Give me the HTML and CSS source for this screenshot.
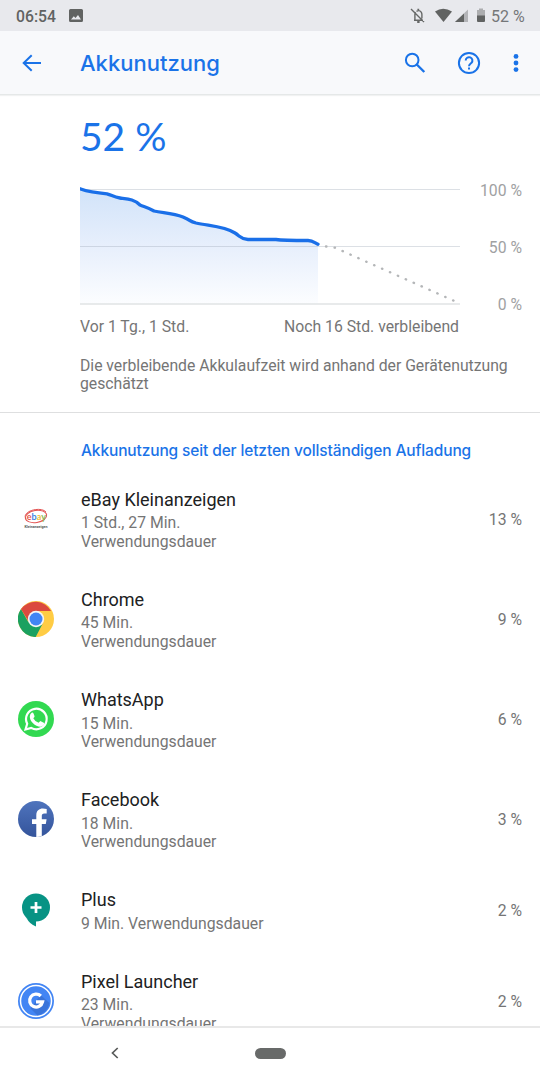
FILE: index.html
```html
<!DOCTYPE html>
<html lang="de">
<head>
<meta charset="utf-8">
<title>Akkunutzung</title>
<link rel="stylesheet" href="styles.css">
</head>
<body>
<div class="screen">
  <header class="status">
    <span class="clock">06:54</span>
    <svg class="status-image" width="14" height="14" viewBox="0 0 14 14"><path fill="#616362" fill-rule="evenodd" d="M1.5 0h11Q14 0 14 1.5v10q0 1.5-1.5 1.5h-11Q0 13 0 11.500v-10Q0 0 1.500 0zM2 10.500h10L9 6 6.500 9 4.800 7.200z"/></svg>
    <svg class="status-icons" width="76" height="18" viewBox="0 0 76 18">
      <g fill="none" stroke="#666867" stroke-width="1.400"><path d="M1 2l13 13M4 13.200h9M4.900 13V7.500q0-1.300.6-2.300M6.500 4.300q3-1.700 4.700.8.700 1 .7 2.400v4"/><path d="M8.300 3V1.800M7.200 15h2.400" stroke-width="1.800"/></g>
      <path fill="#616362" d="M25 4.500Q33 -1 42 4.500L33.500 15z"/>
      <path fill="#b3b4b7" d="M58 2.500V15H45z"/><path fill="#616362" d="M54 6.400V15H45z"/>
      <path fill="#acadaf" d="M67 3h2V1.500h4V3h2v6h-8z"/><path fill="#616362" d="M67 8.500h8V14q0 1-1 1h-6q-1 0-1-1z"/>
    </svg>
    <span class="charge">52 %</span>
  </header>
  <nav class="appbar">
    <svg class="back" width="20" height="18" viewBox="0 0 20 18"><path d="M19 9H1.500M9.700 1.200L1.700 9l8 7.800" fill="none" stroke="#1a73e8" stroke-width="2"/></svg>
    <h1 class="title">Akkunutzung</h1>
    <svg class="search" width="22" height="22" viewBox="0 0 22 22"><circle cx="8.200" cy="8" r="6.300" fill="none" stroke="#1a73e8" stroke-width="2"/><path d="M12.800 12.500l7.500 7.500" stroke="#1a73e8" stroke-width="2.400"/></svg>
    <svg class="help" width="24" height="24" viewBox="0 0 24 24"><g fill="none" stroke="#1a73e8" stroke-width="2"><circle cx="12" cy="12" r="10.100"/><path d="M8.700 9.500a3.350 3.350 0 1 1 5.800 2.300C13 13.100 12 13.500 12 15.200"/></g><path d="M11 16.500h2v2h-2z" fill="#1a73e8"/></svg>
    <svg class="more" width="6" height="20" viewBox="0 0 6 20"><g fill="#1a73e8"><circle cx="3" cy="3.400" r="2.400"/><circle cx="3" cy="10" r="2.400"/><circle cx="3" cy="16.600" r="2.400"/></g></svg>
  </nav>
  <main class="content">
    <section class="summary">
      <div class="level">52 %</div>
      <div class="graph">
        <svg class="chart" width="380" height="124" viewBox="80 184 380 124">
          <defs><linearGradient id="area" x1="0" y1="188" x2="0" y2="304" gradientUnits="userSpaceOnUse"><stop stop-color="#d1e3f9"/><stop offset=".5" stop-color="#e7effc"/><stop offset="1" stop-color="#fcfdff"/></linearGradient></defs>
          <path fill="url(#area)" d="M80 189C89 192 97 193 107 194C112 195 113 197 120 198C128 199 134 200 140 205C145 207 149 208 154 211C163 213 173 213 183 217C192 221 189 221 196 223C209 226 224 226 235 233C241 237 241 239 248 239.500H276C283 240.500 290 240.500 308 240.500C313 240.500 315 243 318 244V304H80z"/>
          <path d="M80 189.500h380M80 246.500h380" stroke="#9aa6b5" stroke-opacity=".35"/><path d="M80 304h380" stroke="#e1e3e5" stroke-width="1.600"/>
          <path fill="none" stroke="#1a6fe8" stroke-width="3.300" stroke-linecap="round" d="M80 188.800C89 192 97 193 107 193.800C112 195 113 197 120 198C128 199 134 199 140 205C145 207 149 208 154 211C163 213 173 213 183 217C192 221 189 221 196 223C209 226 224 226 235 233C241 237 241 239 248 239.500H276C283 240.500 290 240.500 308 240.500C313 240.500 315 243 318 244.200"/>
          <path fill="none" stroke="#b4b6b8" stroke-width="2.400" stroke-linecap="round" stroke-dasharray=".4 8.250" d="M326 246.500L335 247.700L454 300.800"/>
        </svg>
        <div class="scale"><span>100 %</span><span>50 %</span><span>0 %</span></div>
      </div>
      <div class="times"><span>Vor 1 Tg., 1 Std.</span><span>Noch 16 Std. verbleibend</span></div>
      <p class="note">Die verbleibende Akkulaufzeit wird anhand der Gerätenutzung geschätzt</p>
    </section>
    <section class="apps">
      <h2 class="heading">Akkunutzung seit der letzten vollständigen Aufladung</h2>
      <div class="row">
        <svg class="icon" viewBox="0 0 36 36"><g fill="none" stroke="#e35352" stroke-width="1"><ellipse cx="18" cy="15.500" rx="10.800" ry="6" transform="rotate(-9 18 15.500)"/><path d="M8 18C3 10 23 5 28 11"/></g><text class="ebay" x="8.800" y="18.500"><tspan fill="#e5584e">e</tspan><tspan fill="#4285df">b</tspan><tspan fill="#edbd3c">a</tspan><tspan fill="#8dbb56">y</tspan></text><text class="klein" x="6.500" y="26.800" textLength="23" lengthAdjust="spacingAndGlyphs">Kleinanzeigen</text></svg>
        <div class="info"><h3>eBay Kleinanzeigen</h3><p>1 Std., 27 Min.<br>Verwendungsdauer</p></div><span class="percent">13 %</span>
      </div>
      <div class="row">
        <svg class="icon" viewBox="0 0 36 36"><circle cx="18" cy="18" r="18" fill="#fc4"/><path fill="#1ba160" d="M3 8L10.500 21.500 18 27l-.5 9A18 18 0 0 1 3 8z"/><path fill="#1ba160" d="M10 20l8 6 6.500-3L17.700 36l-6-2z"/><path fill="#db4a3f" d="M18 10h15.100A18 18 0 0 0 3 8l7.300 12z"/><circle cx="18" cy="18" r="8.200" fill="#f5f5f5"/><circle cx="18" cy="18" r="6.500" fill="#4285f4"/></svg>
        <div class="info"><h3>Chrome</h3><p>45 Min.<br>Verwendungsdauer</p></div><span class="percent">9 %</span>
      </div>
      <div class="row">
        <svg class="icon" viewBox="0 0 36 36"><circle cx="18" cy="18" r="18" fill="#32d951"/><path fill="none" stroke="#fff" stroke-width="2.200" d="M7.500 28.500l1.700-5.800a10.300 10.300 0 1 1 4 4.200z"/><path fill="#fff" d="M14 11.600q1-.2 1.400.7l1.200 2.900q-.1 1-1.300 2 1.800 3.500 5.300 4.600l1.700-1.800 3.900 2q.2 2.700-3.300 3.700c-5 .5-11.500-5.500-11.100-10.500q.2-2.500 2.200-3.600z"/></svg>
        <div class="info"><h3>WhatsApp</h3><p>15 Min.<br>Verwendungsdauer</p></div><span class="percent">6 %</span>
      </div>
      <div class="row">
        <svg class="icon" viewBox="0 0 36 36"><defs><linearGradient id="fb" x2="0" y2="1"><stop stop-color="#4f74bd"/><stop offset="1" stop-color="#34549b"/></linearGradient></defs><circle cx="18" cy="18" r="18" fill="url(#fb)"/><path fill="#fff" d="M18.300 36V23h-4.300v-4.800h4.300v-4c0-4.500 2.800-6.700 6.600-6.700q2 0 3.800.4v4.600h-2.300c-2.100 0-2.600 1-2.600 2.600v3.100h4.800l-.8 4.800h-4v12l-2.500.8z"/></svg>
        <div class="info"><h3>Facebook</h3><p>18 Min.<br>Verwendungsdauer</p></div><span class="percent">3 %</span>
      </div>
      <div class="row">
        <svg class="icon" viewBox="0 0 36 36"><circle cx="18" cy="15.500" r="14" fill="#079384"/><path fill="#079384" d="M18 28v6.500q-6.500-2.500-9.500-8.500z"/><path d="M18 10v11M12.500 15.500h11" stroke="#fff" stroke-width="2.700"/></svg>
        <div class="info"><h3>Plus</h3><p>9 Min. Verwendungsdauer</p></div><span class="percent">2 %</span>
      </div>
      <div class="row">
        <svg class="icon" viewBox="0 0 36 36"><circle cx="18" cy="18" r="18" fill="#4285f4"/><circle cx="18" cy="18" r="15.500" fill="none" stroke="#fff" stroke-width="1.500"/><path fill="#3974da" d="M22.500 12l9 8q-2 10-12 12.500l-7-7z"/><path fill="none" stroke="#fff" stroke-width="3.300" d="M22.800 13A6.500 6.500 0 1 0 24.500 18.900H18"/></svg>
        <div class="info"><h3>Pixel Launcher</h3><p>23 Min.<br>Verwendungsdauer</p></div><span class="percent">2 %</span>
      </div>
    </section>
  </main>
  <footer class="navigation">
    <svg class="nav-back" width="8" height="12" viewBox="0 0 8 12"><path d="M6.700 1L1.500 6l5.200 5" fill="none" stroke="#585a59" stroke-width="1.700"/></svg>
    <span class="home"></span>
  </footer>
</div>
</body>
</html>
```
FILE: styles.css
```css
* { box-sizing: border-box; }
body, h1, h2, h3, p { margin: 0; }
body { background: #fff; font-family: Roboto, sans-serif; color: #757575; }
svg { display: block; flex: none; }
.screen { width: 540px; height: 1080px; display: flex; flex-direction: column; overflow: hidden; }
.status { height: 31px; flex: none; background: #e8e9ed; display: flex; align-items: center; padding: 1px 16px 0; color: #616362; font-size: 16px; }
.clock { width: 53px; font-size: 15.75px; font-weight: 500; }
.status-icons { margin-left: auto; }
.charge { margin-left: 5px; width: 33px; white-space: nowrap; color: #757779; }
.appbar { height: 64px; flex: none; background: #f8f9fb; border-bottom: 1px solid #e5e8e8; box-shadow: 0 1px 1px #f1f2f2; display: flex; align-items: center; padding: 0 0 0 22px; }
.title { margin-left: 38px; width: 324px; color: #1a73e8; font: 500 22px/28px Inter, sans-serif; }
.help { margin-left: 30.5px; }
.more { margin-left: 32px; }
.content { flex: 1; min-height: 0; overflow: hidden; }
.summary { height: 318px; padding: 17px 18px 0 80px; border-bottom: 1px solid #dedfe0; }
.level { height: 48px; color: #1a73e8; font: 400 39px/48px Lato, sans-serif; white-space: nowrap; }
.graph { display: flex; justify-content: space-between; margin-top: 24px; font-size: 15.75px; height: 129px; }
.scale { height: 132px; display: flex; flex-direction: column; justify-content: space-between; text-align: right; color: #a0a1a2; line-height: 18px; margin-top: -2px; }
.times { display: flex; justify-content: space-between; width: 379px; margin-top: 5px; font-size: 15.75px; line-height: 18px; }
.note { margin-top: 21px; font-size: 15.75px; line-height: 18.400px; letter-spacing: -.02px; }
.heading { height: 57px; padding: 27.5px 0 0 81px; color: #1a73e8; font: 500 15.500px/20px Inter, sans-serif; letter-spacing: -.13px; white-space: nowrap; }
.row { display: flex; align-items: center; padding: 18px 18px 19px; }
.icon { width: 36px; height: 36px; margin-bottom: 2px; }
.info { margin-left: 27px; flex: 1; }
.info h3 { color: #202122; font-size: 18px; font-weight: 400; line-height: 24px; }
.info p { margin-top: 2.3px; font-size: 15.75px; line-height: 18.400px; }
.percent { font-size: 15.75px; }
.ebay { font: 700 9px Lato, sans-serif; }
.klein { font: 700 4px Roboto, sans-serif; fill: #555; }
.navigation { height: 54px; flex: none; border-top: 2px solid #e8e8e8; display: flex; align-items: center; padding: 0 0 2px 111px; background: #fff; }
.home { width: 31px; height: 11px; border-radius: 6px; background: #686a69; margin-left: 136px; }
```
